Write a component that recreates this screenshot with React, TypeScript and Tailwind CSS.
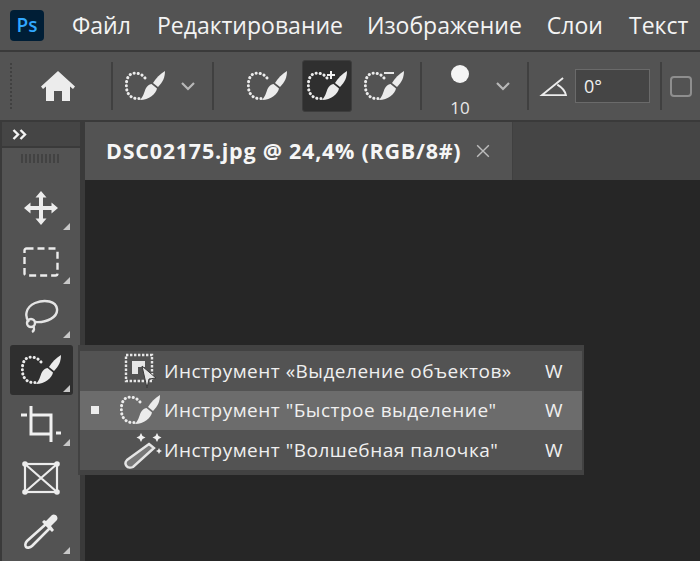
const font = "font-['Open_Sans','Noto_Sans',sans-serif]";

function QuickSelect({ mark, className }: { mark?: "plus" | "minus"; className?: string }) {
  return (
    <svg viewBox="0 0 40 30" className={className} fill="none">
      <path
        d="M20 7C17 2.5 10 1 6 3C1.5 6 1 12 1.5 17C2 23 6 27 11 27.5L15 27.5"
        stroke="#ececec"
        strokeWidth="3"
        strokeLinecap="round"
        strokeDasharray="0.1 4"
      />
      <path d="M40 0C40 6 38 11 33 16L28 12C31 7 35 3 40 0Z" fill="#ececec" />
      <path d="M26.5 13L32 17.5C31 23 24 29 15 29C18 26 19 22 20.5 18C22 15 24 13.5 26.5 13Z" fill="#ececec" />
      {mark === "plus" && <path d="M24 0V8M20 4H28" stroke="#f2f2f2" strokeWidth="2" />}
      {mark === "minus" && <path d="M20 2H30" stroke="#e6e6e6" strokeWidth="2" />}
    </svg>
  );
}

function Chevron({ className }: { className?: string }) {
  return (
    <svg viewBox="0 0 16 10" className={className} fill="none">
      <path d="M2 2L8 8L14 2" stroke="#b8b8b8" strokeWidth="2.2" />
    </svg>
  );
}

function Divider({ className }: { className?: string }) {
  return <div className={`w-[2px] h-[48px] bg-[#404040] shrink-0 ${className}`} />;
}

function Corner() {
  return <div className="absolute right-[3px] bottom-[3px] w-0 h-0 border-l-[7px] border-l-transparent border-b-[7px] border-b-[#c8c8c8]" />;
}

function ToolSlot({ active, corner = true, children }: { active?: boolean; corner?: boolean; children: React.ReactNode }) {
  return (
    <div className={`relative w-[63px] h-[50px] flex items-center justify-center rounded-[3px] ${active ? "bg-[#2f2f2f]" : ""}`}>
      {children}
      {corner && <Corner />}
    </div>
  );
}

function FlyoutRow({ icon, label, active }: { icon: React.ReactNode; label: string; active?: boolean }) {
  return (
    <div className={`h-[39.5px] flex items-center ${active ? "bg-[#6c6c6c]" : ""}`}>
      <div className="w-[29px] flex justify-end pr-[10px]">
        {active && <div className="w-[8px] h-[8px] bg-[#ececec]" />}
      </div>
      <div className="w-[55px] flex pl-[11px]">{icon}</div>
      <span className="flex-1 text-[19px] font-medium tracking-[0.5px] text-[#f0f0f0] whitespace-nowrap">{label}</span>
      <span className="w-[37px] text-[19px] font-medium text-[#f0f0f0]">W</span>
    </div>
  );
}

export default function App() {
  return (
    <div className={`relative w-[700px] h-[561px] overflow-hidden bg-[#262626] ${font}`}>
      {/* menu bar */}
      <div className="h-[50px] bg-[#535353] flex items-center pl-[10px] text-[23px] text-[#f4f4f4] whitespace-nowrap">
        <div className="w-[34px] h-[31px] rounded-[4px] bg-[#001e36] flex items-center justify-center text-[#31a8ff] text-[19px] font-semibold">Ps</div>
        <span className="ml-[28px]">Файл</span>
        <span className="ml-[26px]">Редактирование</span>
        <span className="ml-[24px]">Изображение</span>
        <span className="ml-[25px]">Слои</span>
        <span className="ml-[26px]">Текст</span>
      </div>
      <div className="h-[2px] bg-[#3a3a3a]" />

      {/* options bar */}
      <div className="h-[68px] bg-[#535353] flex items-center">
        <div className="w-[4px] h-[46px] ml-[10px] border-l-2 border-dotted border-[#404040]" />
        <svg viewBox="0 0 36 32" className="w-[36px] h-[32px] ml-[26px] shrink-0" fill="#ececec">
          <path d="M18 1L1 16.5L3 19L6 16.5V31H14V21H22V31H30V16.5L33 19L35 16.5Z" />
        </svg>
        <Divider className="ml-[35px]" />
        <QuickSelect className="w-[40px] h-[30px] ml-[12px] shrink-0" />
        <Chevron className="w-[16px] h-[10px] ml-[15px] shrink-0" />
        <Divider className="ml-[16px]" />
        <QuickSelect className="w-[40px] h-[30px] ml-[33px] shrink-0" />
        <div className="w-[50px] h-[52px] ml-[15px] shrink-0 rounded-[3px] bg-[#2f2f2f] border border-[#3d3d3d] flex items-center justify-center">
          <QuickSelect mark="plus" className="w-[40px] h-[30px]" />
        </div>
        <QuickSelect mark="minus" className="w-[40px] h-[30px] ml-[12px] shrink-0" />
        <Divider className="ml-[16px]" />
        <div className="ml-[22px] mt-[10px] w-[32px] shrink-0 flex flex-col items-center">
          <div className="w-[18px] h-[18px] rounded-full bg-[#f4f4f4]" />
          <span className="text-[17px] leading-[18px] mt-[16px] text-[#e8e8e8]">10</span>
        </div>
        <Chevron className="w-[16px] h-[10px] ml-[19px] shrink-0" />
        <Divider className="ml-[16px]" />
        <svg viewBox="0 0 30 22" className="w-[29px] h-[21px] ml-[10px] shrink-0" fill="none">
          <path d="M25 2L3 20H28C27 15 24 12 19 9" stroke="#ececec" strokeWidth="2" />
        </svg>
        <div className="w-[75px] h-[34px] ml-[7px] shrink-0 bg-[#454545] border border-[#6a6a6a] pl-[8px] flex items-center text-[18px] text-[#f0f0f0]">0°</div>
        <Divider className="ml-[10px]" />
        <div className="w-[22px] h-[21px] ml-[8px] shrink-0 rounded-[4px] border-2 border-[#8e8e8e]" />
      </div>
      <div className="h-[2px] bg-[#3a3a3a]" />

      {/* workspace */}
      <div className="flex h-[439px]">
        <div className="w-[80px] shrink-0 pl-[2px] flex flex-col bg-[#3a3a3a]">
          <div className="h-[24px] bg-[#454545] flex items-center pl-[10px]">
            <svg viewBox="0 0 15 11" className="w-[15px] h-[11px]" fill="none" stroke="#f4f4f4" strokeWidth="2.4">
              <path d="M1.5 1L6 5.5L1.5 10M8.5 1L13 5.5L8.5 10" />
            </svg>
          </div>
          <div className="flex-1 mt-[2px] bg-[#535353] flex flex-col items-center">
            <div className="w-[40px] h-[9px] mt-[6px] mb-[20px] bg-[repeating-linear-gradient(90deg,#424242_0,#424242_2px,transparent_2px,transparent_4px)]" />
            <div className="flex flex-col gap-[4px] w-[63px]">
              <ToolSlot>
                <svg viewBox="0 0 34 34" className="w-[34px] h-[34px]" fill="#ececec">
                  <path d="M17 0L22.5 6.5H19V15H27.5V11.5L34 17L27.5 22.5V19H19V27.5H22.5L17 34L11.5 27.5H15V19H6.5V22.5L0 17L6.5 11.5V15H15V6.5H11.5Z" />
                </svg>
              </ToolSlot>
              <ToolSlot>
                <svg viewBox="0 0 36 30" className="w-[36px] h-[30px]" fill="none">
                  <rect x="1.5" y="1.5" width="33" height="27" rx="2" stroke="#ececec" strokeWidth="2.4" strokeDasharray="7 4" />
                </svg>
              </ToolSlot>
              <ToolSlot>
                <svg viewBox="0 0 36 36" className="w-[36px] h-[36px]" fill="none" stroke="#e4e4e4" strokeWidth="2.4">
                  <path d="M6 24C1 18 3 9 12 5C22 1 33 3 34 11C35 19 24 25 12 24" />
                  <circle cx="8" cy="25" r="4" />
                  <path d="M10 28C12 30 11 33 9 34" />
                </svg>
              </ToolSlot>
              <ToolSlot active>
                <QuickSelect className="w-[40px] h-[30px]" />
              </ToolSlot>
              <ToolSlot>
                <svg viewBox="0 0 40 36" className="w-[40px] h-[36px]" fill="none" stroke="#f0f0f0" strokeWidth="3">
                  <path d="M0 9H6M10 0V28H30M10 9H30V36M35 27H40" />
                </svg>
              </ToolSlot>
              <ToolSlot corner={false}>
                <svg viewBox="0 0 38 34" className="w-[38px] h-[34px]" fill="none" stroke="#ececec" strokeWidth="2.2">
                  <rect x="3" y="3" width="32" height="28" />
                  <path d="M3 3L35 31M35 3L3 31" />
                  <g fill="#ececec" stroke="none">
                    <circle cx="3" cy="3" r="2.8" /><circle cx="35" cy="3" r="2.8" />
                    <circle cx="3" cy="31" r="2.8" /><circle cx="35" cy="31" r="2.8" />
                  </g>
                </svg>
              </ToolSlot>
              <ToolSlot>
                <svg viewBox="0 0 36 38" className="w-[36px] h-[38px]">
                  <path d="M23 11L27 15L9 33C7 35 4 35 3 34C2 33 2 30 4 28Z" fill="none" stroke="#ececec" strokeWidth="2.6" />
                  <path d="M19 9L29 19L31 17L28 13L34 7C36 4 32 0 29 2L23 8L21 7Z" fill="#ececec" />
                </svg>
              </ToolSlot>
            </div>
          </div>
        </div>
        <div className="w-[5px] shrink-0 bg-[#3a3a3a]" />
        <div className="flex-1 flex flex-col">
          <div className="h-[58px] bg-[#454545] flex">
            <div className="w-[428px] bg-[#535353] flex items-center pl-[21px] border-r border-[#404040]">
              <span className="w-[370px] shrink-0 text-[21.5px] font-bold tracking-[0.75px] text-[#f6f6f6] whitespace-nowrap">DSC02175.jpg @ 24,4% (RGB/8#)</span>
              <svg viewBox="0 0 12 12" className="w-[14px] h-[14px] shrink-0" stroke="#bdbdbd" strokeWidth="1.2">
                <path d="M1 1L11 11M11 1L1 11" />
              </svg>
            </div>
          </div>
          <div className="flex-1 bg-[#262626]" />
        </div>
      </div>

      {/* tool flyout */}
      <div className="absolute left-[78px] top-[345px] w-[506px] h-[130px] bg-[#424242] p-[2px] pt-[6px]">
        <div className="bg-[#535353] h-[118.5px]">
          <FlyoutRow
            label="Инструмент «Выделение объектов»"
            icon={
              <svg viewBox="0 0 36 38" className="w-[36px] h-[38px] ml-[3px]" fill="none">
                <rect x="3" y="3" width="26" height="26" stroke="#e6e6e6" strokeWidth="2.4" strokeDasharray="2.4 1.6" />
                <path d="M9 9H22V15H15V22H9Z" fill="#e6e6e6" />
                <path d="M19 14L33 26L26 27L24 36Z" fill="#e6e6e6" stroke="#3a3a3a" />
              </svg>
            }
          />
          <FlyoutRow active label={'Инструмент "Быстрое выделение"'} icon={<QuickSelect className="w-[40px] h-[30px]" />} />
          <FlyoutRow
            label={'Инструмент "Волшебная палочка"'}
            icon={
              <svg viewBox="0 0 40 38" className="w-[40px] h-[38px] ml-[3px]" fill="none">
                <path d="M26 13L31 17L10 36C8 37 5 37 3.5 35C2 33 2 31 4 29Z" stroke="#e6e6e6" strokeWidth="2.4" fill="#e6e6e6" fillOpacity="0.25" />
                <g fill="#f0f0f0">
                  <path d="M18 2L19.5 5L22.5 6.5L19.5 8L18 11L16.5 8L13.5 6.5L16.5 5Z" />
                  <path d="M34 2L35.5 5L38.5 6.5L35.5 8L34 11L32.5 8L29.5 6.5L32.5 5Z" />
                  <path d="M36 17L37 19L39 20L37 21L36 23L35 21L33 20L35 19Z" />
                </g>
              </svg>
            }
          />
        </div>
      </div>
    </div>
  );
}
